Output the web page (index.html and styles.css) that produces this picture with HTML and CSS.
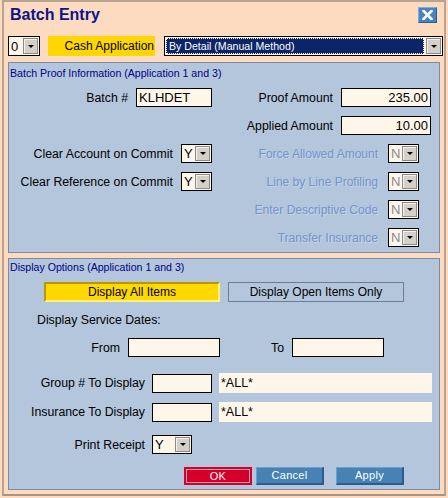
FILE: index.html
```html
<!DOCTYPE html>
<html>
<head>
<meta charset="utf-8">
<link rel="stylesheet" href="styles.css">
</head>
<body>
<div class="window">
  <div class="titlebar">
    <div class="title">Batch Entry</div>
    <div class="close"><svg width="11" height="10" viewBox="0 0 11 10"><path d="M1.5 1 L9.5 9 M9.5 1 L1.5 9" stroke="#fff" stroke-width="2.6" stroke-linecap="square"/></svg></div>
  </div>
  <div class="toprow">
    <div class="dd dd-top"><span class="dd-val">0</span><span class="dd-btn"></span></div>
    <div class="cashapp">Cash Application</div>
    <div class="bigdd"><div class="bigdd-val"><span>By Detail (Manual Method)</span></div><span class="dd-btn big-btn"></span></div>
  </div>

  <div class="panel panel1">
    <div class="legend">Batch Proof Information (Application 1 and 3)</div>
    <div class="cols">
      <div class="col col-left">
        <div class="row"><span class="lbl">Batch #</span><div class="inp inp-batch">KLHDET</div></div>
        <div class="row"></div>
        <div class="row"><span class="lbl">Clear Account on Commit</span><div class="dd dd-s"><span class="dd-val">Y</span><span class="dd-btn"></span></div></div>
        <div class="row"><span class="lbl">Clear Reference on Commit</span><div class="dd dd-s"><span class="dd-val">Y</span><span class="dd-btn"></span></div></div>
      </div>
      <div class="col col-right">
        <div class="row"><span class="lbl">Proof Amount</span><div class="inp inp-amt">235.00</div></div>
        <div class="row"><span class="lbl">Applied Amount</span><div class="inp inp-amt">10.00</div></div>
        <div class="row row-dd"><span class="lbl dis">Force Allowed Amount</span><div class="dd dd-s dd-dis"><span class="dd-val">N</span><span class="dd-btn"></span></div></div>
        <div class="row row-dd"><span class="lbl dis">Line by Line Profiling</span><div class="dd dd-s dd-dis"><span class="dd-val">N</span><span class="dd-btn"></span></div></div>
        <div class="row row-dd"><span class="lbl dis">Enter Descriptive Code</span><div class="dd dd-s dd-dis"><span class="dd-val">N</span><span class="dd-btn"></span></div></div>
        <div class="row row-dd"><span class="lbl dis">Transfer Insurance</span><div class="dd dd-s dd-dis"><span class="dd-val">N</span><span class="dd-btn"></span></div></div>
      </div>
    </div>
  </div>

  <div class="panel panel2">
    <div class="legend">Display Options (Application 1 and 3)</div>
    <div class="toggles">
      <div class="tog tog-on">Display All Items</div>
      <div class="tog tog-off">Display Open Items Only</div>
    </div>
    <div class="svc">Display Service Dates:</div>
    <div class="daterow">
      <span class="lbl lbl-from">From</span><div class="inp inp-date"></div>
      <span class="lbl lbl-to">To</span><div class="inp inp-date"></div>
    </div>
    <div class="frow frow-group"><span class="lbl lbl-f">Group # To Display</span><div class="inp inp-code"></div><div class="allfld">*ALL*</div></div>
    <div class="frow frow-ins"><span class="lbl lbl-f">Insurance To Display</span><div class="inp inp-code"></div><div class="allfld">*ALL*</div></div>
    <div class="frow frow-print"><span class="lbl lbl-f">Print Receipt</span><div class="dd dd-m"><span class="dd-val">Y</span><span class="dd-btn"></span></div></div>
    <div class="btns">
      <div class="btn btn-ok">OK</div>
      <div class="btn btn-blue btn-cancel">Cancel</div>
      <div class="btn btn-blue btn-apply">Apply</div>
    </div>
  </div>
</div>
</body>
</html>
```
FILE: styles.css
```css
* { box-sizing: border-box; }
html, body { margin: 0; padding: 0; }
body {
  width: 448px;
  height: 498px;
  background: #fddbc0;
  font-family: "Liberation Sans", Arial, sans-serif;
  font-size: 12px;
  color: #000;
  overflow: hidden;
  padding: 0 2px;
}
.window {
  width: 444px;
  height: 496px;
  border: 2px solid #b8a490;
  border-bottom-color: #a89480;
  background: #fddbc0;
  padding: 0 4px 4px 4px;
  display: flex;
  flex-direction: column;
}
.titlebar {
  display: flex;
  justify-content: space-between;
  align-items: flex-start;
  height: 34px;
  padding-left: 2px;
  padding-right: 3px;
}
.title {
  font-weight: bold;
  font-size: 16px;
  line-height: 18px;
  margin-top: 4px;
  color: #0c148c;
}
.close {
  width: 19px;
  height: 16px;
  margin-top: 5px;
  background: #4a84c0;
  border-top: 1px solid #80acd8;
  border-left: 1px solid #80acd8;
  border-right: 1px solid #2c5c94;
  border-bottom: 1px solid #2c5c94;
  display: flex;
  align-items: center;
  justify-content: center;
}
.toprow {
  display: flex;
  align-items: center;
  height: 20px;
  margin-right: -3px;
}
.dd {
  display: flex;
  align-items: center;
  height: 19px;
  border: 1px solid #000;
  background: #fff6ea;
  padding: 1px;
}
.dd-val {
  flex: 1;
  padding-left: 1px;
  font-size: 13px;
  line-height: 15px;
}
.dd-btn {
  width: 15px;
  height: 15px;
  background: #d4d0c8;
  border: 1px solid #8a8a8a;
  box-shadow: inset 1px 1px 0 #f4f2ee;
  display: flex;
  align-items: center;
  justify-content: center;
}
.dd-btn::after {
  content: "";
  width: 0;
  height: 0;
  border-left: 3px solid transparent;
  border-right: 3px solid transparent;
  border-top: 3px solid #000;
}
.dd-top { width: 32px; height: 20px; }
.dd-top .dd-btn { height: 16px; }
.dd-s { width: 31px; }
.dd-m { width: 40px; }
.dd-dis .dd-val { color: #8a8a8a; }
.cashapp {
  width: 107px;
  height: 20px;
  margin-left: 8px;
  background: #ffd700;
  line-height: 20px;
  font-size: 12px;
  text-align: right;
  padding-right: 1px;
}
.bigdd {
  margin-left: 9px;
  width: 279px;
  height: 20px;
  border: 1px solid #000;
  background: #fff6ea;
  padding: 1px;
  display: flex;
  align-items: center;
}
.bigdd-val {
  flex: 1;
  height: 16px;
  background: #0c2468;
  border: 1px dotted #fff6ea;
  color: #fff;
  font-size: 10.6px;
  line-height: 14px;
  padding-left: 2px;
  margin-right: 2px;
}
.big-btn { height: 16px; }
.panel {
  background: #b4c6dc;
  border: 1px solid #7d8aa4;
}
.panel1 {
  margin-top: 6px;
  height: 191px;
}
.panel2 {
  margin-top: 5px;
  flex: 1;
}
.legend {
  font-size: 10.6px;
  line-height: 12px;
  color: #000088;
  padding-left: 1px;
}
.panel1 .legend { padding-top: 4px; }
.panel2 .legend { padding-top: 2px; }
.cols {
  display: flex;
  margin-top: 9px;
}
.col {
  display: flex;
  flex-direction: column;
  gap: 9px;
}
.col-left { width: 203px; }
.col-right { width: 219px; }
.row {
  height: 19px;
  display: flex;
  align-items: center;
  justify-content: flex-end;
  gap: 8px;
}
.row-dd { padding-right: 12px; gap: 10px; }
.lbl { font-size: 12.3px; white-space: nowrap; }
.dis { font-size: 12px; color: #7294cc; text-shadow: 1px 1px 0 rgba(255,255,255,0.25); }
.inp {
  height: 19px;
  border: 1px solid #000;
  background: #fff6ea;
  font-size: 13px;
  line-height: 17px;
  padding: 0 2px;
}
.inp-batch { width: 76px; }
.inp-amt { width: 90px; text-align: right; }
.toggles {
  display: flex;
  gap: 8px;
  margin-top: 9px;
  padding-left: 35px;
}
.tog {
  width: 176px;
  height: 20px;
  text-align: center;
  font-size: 12px;
}
.tog-on {
  background: #ffd800;
  border-top: 2px solid #b89800;
  border-left: 2px solid #b89800;
  border-right: 2px solid #fff080;
  border-bottom: 2px solid #fff080;
  line-height: 16px;
}
.tog-off {
  border: 1px solid #6c7c98;
  line-height: 18px;
}
.svc {
  margin-top: 11px;
  padding-left: 28px;
  line-height: 14px;
  font-size: 12.3px;
}
.daterow {
  display: flex;
  align-items: center;
  margin-top: 11px;
}
.lbl-from { width: 111px; text-align: right; margin-right: 8px; }
.lbl-to { width: 64px; text-align: right; margin-right: 8px; }
.inp-date { width: 92px; }
.frow {
  display: flex;
  align-items: center;
}
.frow-group { margin-top: 16px; }
.frow-ins { margin-top: 9px; }
.frow-print { margin-top: 13px; }
.lbl-f { width: 136px; text-align: right; margin-right: 7px; }
.inp-code { width: 60px; }
.allfld {
  margin-left: 7px;
  width: 213px;
  height: 20px;
  background: #fff6ea;
  font-size: 12.5px;
  line-height: 20px;
  padding-left: 2px;
}
.btns {
  display: flex;
  margin-top: 13px;
  padding-left: 175px;
}
.btn {
  width: 68px;
  height: 18px;
  color: #fff;
  font-size: 11px;
  text-align: center;
  letter-spacing: 0.3px;
}
.btn-ok {
  background: #d4002a;
  border: 2px solid #d4002a;
  box-shadow: inset 0 0 0 1px #d8a4b0;
  line-height: 14px;
}
.btn-blue {
  background: #4682b4;
  border-top: 1px solid #70a0d0;
  border-left: 1px solid #70a0d0;
  border-right: 2px solid #2c5c8c;
  border-bottom: 2px solid #2c5c8c;
  line-height: 15px;
}
.btn-cancel { margin-left: 4px; }
.btn-apply { margin-left: 12px; }
```
